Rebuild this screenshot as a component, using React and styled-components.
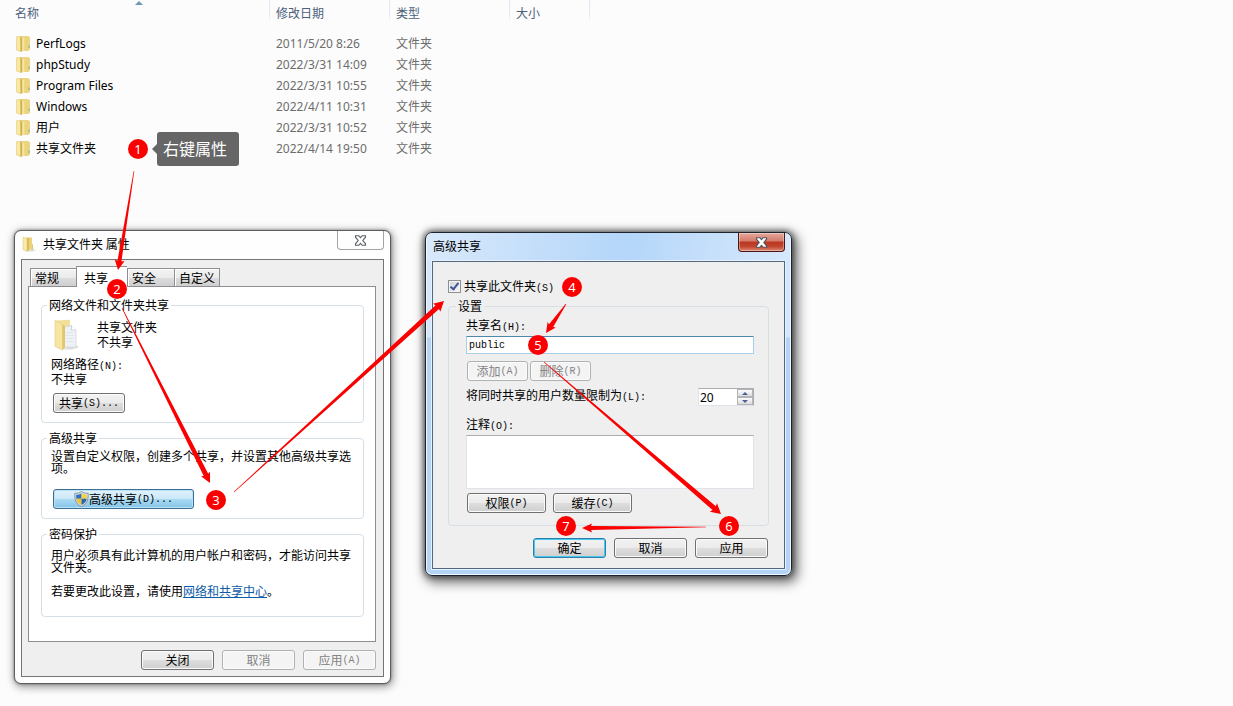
import React from "react";
import styled, { createGlobalStyle, css } from "styled-components";

const GlobalStyle = createGlobalStyle`
  *, *::before, *::after {
    box-sizing: border-box;
  }

  body {
    margin: 0;
    background: #fcfcfc;
  }

  body, button, input, textarea {
    font-family: "Noto Sans", "Noto Sans CJK SC", sans-serif;
    font-size: 12px;
    color: #000;
  }
`;

const Desktop = styled.main`
  position: relative;
  min-height: 100vh;
  overflow: hidden;
`;

/* ---------- file list ---------- */

const FileTable = styled.table`
  border-collapse: collapse;
  table-layout: fixed;
  width: 590px;
`;

const HeadCell = styled.th`
  position: relative;
  width: ${(p) => p.$width}px;
  height: 33px;
  padding: 5px 0 0 ${(p) => (p.$first ? 15 : 6)}px;
  line-height: 18px;
  vertical-align: top;
  text-align: left;
  font-weight: 400;
  color: #4c607a;
  background: linear-gradient(#dbe6f2, #e3ecf5 60%, #fcfcfc) right top / 1px 23px no-repeat;
`;

const SortArrow = styled.svg`
  position: absolute;
  top: 1px;
  left: 135px;
`;

const Cell = styled.td`
  height: 21px;
  padding: 0 0 0 6px;
  line-height: 20px;
  color: #6d6d6d;
`;

const NameCell = styled(Cell)`
  padding-left: 16px;
  color: #000;

  span {
    display: flex;
    align-items: center;
    gap: 6px;
  }
`;

/* ---------- windows ---------- */

const WindowBox = styled.section`
  position: absolute;
  left: ${(p) => p.$left}px;
  top: ${(p) => p.$top}px;
  width: ${(p) => p.$width}px;
  padding: 0 6px 6px;
  border-radius: 7px;
  font-family: "Noto Sans CJK SC", sans-serif;
  line-height: 12px;

  ${(p) =>
    p.$active
      ? css`
          border: 1px solid #1d242c;
          background: linear-gradient(#d3e6fb 0 104px, #b5d3f5 105px);
          box-shadow: inset 0 0 0 1px #eef6ff, 0 0 6px 1px rgba(0, 0, 0, 0.6), 3px 4px 12px 3px rgba(0, 0, 0, 0.5);
        `
      : css`
          border: 1px solid #5c5c5c;
          background: #fefefe;
          box-shadow: 0 0 3px rgba(0, 0, 0, 0.4), 1px 2px 8px 1px rgba(0, 0, 0, 0.4);
        `}
`;

const TitleBar = styled.header`
  display: flex;
  align-items: flex-start;
  height: 28px;
  margin: 0 -5px;
  padding: 0 5px 0 6px;
  border-radius: 6px 6px 0 0;
  background: ${(p) => (p.$active ? "linear-gradient(100deg, #d9e9fb, #c4defa 30%, #b4d6fa 55%, #c4defa 75%, #d6e8fc)" : "transparent")};
`;

const Title = styled.h2`
  display: flex;
  align-items: center;
  gap: 7px;
  flex: 1;
  height: 26px;
  margin: 0;
  font-size: 12px;
  font-weight: 400;
`;

const CloseButton = styled.button`
  display: flex;
  align-items: center;
  justify-content: center;
  width: 47px;
  height: 19px;
  padding: 0;
  border: 1px solid ${(p) => (p.$active ? "#4b1613" : "#a0a4a8")};
  border-top: 0;
  border-radius: 0 0 4px 4px;
  background: ${(p) => (p.$active ? "linear-gradient(#e5a99b, #d3796a 45%, #bb3520 50%, #c2452f 75%, #de8b74)" : "#fefefe")};
  box-shadow: ${(p) => (p.$active ? "inset 0 0 0 1px rgba(255, 255, 255, 0.35)" : "none")};
`;

const Client = styled.div`
  border: 1px solid ${(p) => (p.$active ? "#53677f" : "#757575")};
  background: #efefef;
  padding: ${(p) => (p.$active ? "17px 15px 10px" : "6px 7px 6px 6px")};
  box-shadow: 0 0 0 1px ${(p) => (p.$active ? "#e6f2ff" : "#fff")};
`;

const Tabs = styled.div`
  display: flex;
  align-items: flex-end;
  height: 20px;
  padding-left: 2px;
`;

const Tab = styled.button`
  height: 18px;
  padding: 0 0 0 4px;
  width: ${(p) => p.$width}px;
  text-align: left;
  font-family: inherit;
  line-height: 18px;
  border: 1px solid #8c8e94;
  border-bottom: 0;
  border-right-width: ${(p) => (p.$last ? 1 : 0)}px;
  background: linear-gradient(#f3f3f3, #ebebeb 50%, #dddddd 52%, #cfcfcf);
  box-shadow: inset 1px 1px 0 #fff;

  &[aria-selected="true"] {
    position: relative;
    height: 21px;
    margin-bottom: -1px;
    padding-left: 7px;
    line-height: 17px;
    background: #fff;
  }
`;

const Panel = styled.div`
  display: flex;
  flex-direction: column;
  gap: 9px;
  padding: 12px 11px 24px 12px;
  border: 1px solid #8c8e94;
  background: #fff;
`;

const Group = styled.fieldset`
  min-width: 0;
  margin: ${(p) => (p.$inset ? "7px 0 12px" : "0")};
  padding: 0 ${(p) => (p.$inset ? 7 : 5)}px;
  border: 1px solid #d5dfe5;
  border-radius: 4px;
`;

const Legend = styled.legend`
  padding: 0 2px;
  line-height: 12px;
`;

const GroupBody = styled.div`
  display: flex;
  flex-direction: column;
  align-items: flex-start;
  gap: ${(p) => p.$gap}px;
  padding: ${(p) => p.$pad};
`;

const Lines = styled.p`
  margin: 0;
  line-height: ${(p) => (p.$loose ? 15 : 12)}px;
  white-space: nowrap;
`;

const ShareInfo = styled.div`
  display: flex;
  height: 30px;
  gap: 17px;
  padding-left: 2px;
`;

const ButtonRow = styled.div`
  display: flex;
  gap: ${(p) => p.$gap || 0}px;
  padding-left: ${(p) => p.$indent || 0}px;
`;

const Footer = styled.footer`
  display: flex;
  justify-content: flex-end;
  gap: 8px;
  margin-top: ${(p) => p.$top || 0}px;
  padding-right: ${(p) => p.$right || 0}px;
`;

const Button = styled.button`
  display: flex;
  align-items: center;
  justify-content: center;
  width: ${(p) => p.$width || 73}px;
  height: 20px;
  padding: 0;
  font-family: inherit;
  line-height: 18px;
  white-space: nowrap;
  border: 1px solid #707070;
  border-radius: 3px;
  background: linear-gradient(#f2f2f2, #ebebeb 48%, #dddddd 52%, #cfcfcf);
  box-shadow: inset 0 0 0 1px #fbfbfb;

  &:disabled {
    color: #838383;
    border-color: #adb2b5;
    background: #f4f4f4;
  }

  ${(p) =>
    p.$hot &&
    css`
      border-color: #3c6f94;
      background: linear-gradient(#e0f2fc, #cbe8f8 48%, #a9daf3 52%, #84c4e6);
      box-shadow: inset 0 0 0 1px #b9e2f6;
    `}

  ${(p) =>
    p.$default &&
    css`
      border-color: #2f7ea6;
      box-shadow: inset 0 0 0 1px #46c8f2;
    `}
`;

/* latin parts are half as wide as a chinese character */
const Mono = styled.span`
  font-family: "Liberation Mono", monospace;
  font-size: 10px;
  line-height: 1px;
`;

const Link = styled.a`
  color: #0b5ba8;
  text-decoration: underline;
`;

const CheckRow = styled.div`
  display: flex;
  align-items: center;
  gap: 3px;
  height: 14px;
`;

const CheckBox = styled.input`
  appearance: none;
  display: flex;
  justify-content: center;
  width: 13px;
  height: 13px;
  margin: 0;
  border: 1px solid #8e8f8f;
  background: linear-gradient(135deg, #cdd3da, #f6f6f6);
  box-shadow: inset 0 0 0 1px #f4f4f4;

  &:checked::after {
    content: "";
    width: 5px;
    height: 9px;
    border: solid #3f5595;
    border-width: 0 2px 2px 0;
    transform: rotate(38deg);
  }
`;

const Label = styled.label`
  line-height: 14px;
  white-space: nowrap;
`;

const TextInput = styled.input`
  display: block;
  width: 100%;
  height: 18px;
  padding: 0 2px;
  border: 1px solid #a9cfe6;
  border-top-color: #4f87ad;
  border-radius: 1px;
  font-family: "Liberation Mono", monospace;
  font-size: 10px;
  background: #fff;
`;

const Field = styled.div`
  display: flex;
  flex-direction: column;
  gap: 4px;
  width: 100%;
  margin-top: ${(p) => p.$top || 0}px;
`;

const Comment = styled.textarea`
  display: block;
  width: 100%;
  height: 54px;
  resize: none;
  border: 1px solid #e2e3ea;
  border-top-color: #abadb3;
  background: #fff;
`;

const LimitRow = styled.div`
  display: flex;
  align-items: flex-start;
  justify-content: space-between;
  width: 100%;
`;

const Spinner = styled.div`
  display: flex;
  width: 56px;
  height: 18px;
  border: 1px solid #e2e3ea;
  border-color: #abadb3 #abadb3 #e2e3ea #e2e3ea;
  background: #fff;

  input {
    flex: 1;
    min-width: 0;
    padding: 0 1px;
    border: 0;
    background: transparent;
  }
`;

const SpinButtons = styled.div`
  display: flex;
  flex-direction: column;
  width: 16px;

  button {
    display: flex;
    flex: 1;
    align-items: center;
    justify-content: center;
    padding: 0;
    border: 1px solid #b0b3b8;
    background: linear-gradient(#fbfbfb, #dcdcdc);
  }
`;

/* ---------- annotations ---------- */

const Badge = styled.div`
  position: absolute;
  left: ${(p) => p.$x - 10}px;
  top: ${(p) => p.$y - 10}px;
  width: 20px;
  height: 20px;
  border-radius: 50%;
  background: #fb0000;
  color: #fff;
  font-size: 13px;
  line-height: 20px;
  text-align: center;
`;

const Tip = styled.div`
  position: absolute;
  left: 157px;
  top: 132px;
  height: 34px;
  padding: 0 12px 0 6px;
  border-radius: 3px;
  background: #666;
  color: #fff;
  font-size: 16px;
  line-height: 34px;

  &::before {
    content: "";
    position: absolute;
    left: -5px;
    top: 12px;
    border: solid transparent;
    border-width: 5px 5px 5px 0;
    border-right-color: #666;
  }
`;

const ArrowLayer = styled.svg`
  position: absolute;
  left: 0;
  top: 0;
  pointer-events: none;
`;

const files = [
  { name: "PerfLogs", date: "2011/5/20 8:26" },
  { name: "phpStudy", date: "2022/3/31 14:09" },
  { name: "Program Files", date: "2022/3/31 10:55" },
  { name: "Windows", date: "2022/4/11 10:31" },
  { name: "用户", date: "2022/3/31 10:52" },
  { name: "共享文件夹", date: "2022/4/14 19:50" },
];

const steps = [
  [138, 149],
  [117, 289],
  [216, 500],
  [572, 287],
  [538, 345],
  [729, 526],
  [566, 526],
];

const arrows = [
  { from: [134, 171], to: [118, 270], shaft: 4, head: 10 },
  { from: [122, 308], to: [210, 483], shaft: 5, head: 10 },
  { from: [234, 492], to: [444, 301], shaft: 5, head: 11 },
  { from: [566, 304], to: [546, 333], shaft: 5, head: 10 },
  { from: [544, 362], to: [721, 514], shaft: 5, head: 11 },
  { from: [706, 527], to: [582, 528], shaft: 4, head: 9 },
];

const Arrow = ({ from, to, shaft, head }) => {
  const dx = to[0] - from[0];
  const dy = to[1] - from[1];
  const len = Math.hypot(dx, dy);
  const angle = (Math.atan2(dy, dx) * 180) / Math.PI;
  const neck = len - 9;
  return (
    <path
      transform={`translate(${from[0]} ${from[1]}) rotate(${angle})`}
      d={`M0 -.3 L${neck} ${-shaft / 2} L${neck - 1} ${-head / 2} L${len} 0 L${neck - 1} ${head / 2} L${neck} ${shaft / 2} L0 .3 Z`}
      fill="#fb0000"
    />
  );
};

const FolderIcon = () => (
  <svg width="14" height="16" viewBox="0 0 14 16" aria-hidden="true">
    <path d="M4 .5h8.500l1 1v12l-1 1H5z" fill="#ecd680" stroke="#e2c871" strokeWidth=".6" />
    <path d="M8 1.500h4.500v12.500H8z" fill="#ecd47a" />
    <path d="M.6.8L4.500.5 5 15.500.6 14z" fill="#f8e9a7" stroke="#e0c468" strokeWidth=".6" />
    <path d="M4.400.6L6.300 2.200v13.200H4.600z" fill="#cfb04a" />
    <path d="M6.300 2.200L8.300 1.500v13l-2 .9z" fill="#f5e6a6" />
    <path d="M12.600 9.500h.9v2.500h-.9z" fill="#6aa7a0" />
  </svg>
);

const TitleFolderIcon = () => (
  <svg width="14" height="16" viewBox="0 0 14 16" aria-hidden="true">
    <path d="M10 12l3.500 2-3 1.500H5z" fill="#ddd" />
    <path d="M4 1.500h6v12L5 14z" fill="#ecd27b" />
    <path d="M1 1l4 1.600V15.500L1 13.600z" fill="#f9e9ab" stroke="#dfc46c" strokeWidth=".5" />
    <path d="M5 2.600l2-1v12.600l-2 1.300z" fill="#d9bd5c" />
    <path d="M10 8l1 .5v4.700l-1 .4z" fill="#dfc770" />
  </svg>
);

const BigFolderIcon = () => (
  <svg width="27" height="32" viewBox="0 0 27 32" aria-hidden="true">
    <path d="M21 25l5 3-7 2.500H9z" fill="#ddd" />
    <path d="M2 1.500L17 .8v25L9 29z" fill="#f1e09b" />
    <path d="M11 8l7.500-1.500 4.500 4.500v17.500L11 28z" fill="#eef1f6" stroke="#c8ced4" strokeWidth=".6" />
    <path d="M18.500 6.500v4.500H23" fill="#fff" stroke="#b9c0c7" strokeWidth=".6" />
    <path d="M12.500 13.500h8M12.500 16.500h8M12.500 19.500h8M12.500 22.500h8" fill="none" stroke="#e0e5ec" />
    <path d="M2 1.500l7.500 4V31L2 27.500z" fill="#f7e6a3" stroke="#e2ca79" strokeWidth=".6" />
    <path d="M9.500 5.500L12 7v21.500L9.500 31z" fill="#e0c76c" />
  </svg>
);

const ShieldIcon = () => (
  <svg width="15" height="16" viewBox="0 0 15 16" aria-hidden="true">
    <path d="M7.500.5C9.500 2 11.500 2.300 14.200 2.300 14.400 8 13.500 13 7.500 15.600 1.500 13 .6 8 .8 2.300 3.500 2.300 5.500 2 7.500.5z" fill="#d6dde3" stroke="#77858f" strokeWidth=".8" />
    <path d="M7.500 2.300v5.500H2.300c-.1-1.300-.1-2.700-.1-4 2 0 3.800-.5 5.300-1.500z" fill="#2f70c0" />
    <path d="M7.500 2.300v5.500h5.200c.1-1.300.1-2.700.1-4-2 0-3.800-.5-5.300-1.500z" fill="#f6d23e" />
    <path d="M7.500 7.800v6.100C4 12.400 2.700 10.300 2.300 7.800z" fill="#f1c22c" />
    <path d="M7.500 7.800v6.100c3.500-1.500 4.800-3.600 5.200-6.100z" fill="#2a66b5" />
  </svg>
);

const CloseIcon = ({ active }) => (
  <svg width="13" height="11" viewBox="0 0 13 11" aria-hidden="true">
    <path
      d="M1.500.7h3.300l1.700 2L8.200.7h3.300v1.500L8.800 5.500l2.700 3.300v1.500H8.200l-1.700-2-1.700 2H1.500V8.800L4.200 5.500 1.500 2.200z"
      fill={active ? "#fff" : "#fdfdfd"}
      stroke={active ? "#51555f" : "#5a5e66"}
      strokeWidth="1.100"
    />
  </svg>
);

const FileList = () => (
  <FileTable>
    <thead>
      <tr>
        <HeadCell $width={270} $first>
          名称
          <SortArrow width="8" height="4" viewBox="0 0 8 4" aria-hidden="true">
            <path d="M4 0l4 4H0z" fill="#6d98b5" />
          </SortArrow>
        </HeadCell>
        <HeadCell $width={120}>修改日期</HeadCell>
        <HeadCell $width={120}>类型</HeadCell>
        <HeadCell $width={80}>大小</HeadCell>
      </tr>
    </thead>
    <tbody>
      {files.map((file) => (
        <tr key={file.name}>
          <NameCell>
            <span>
              <FolderIcon />
              {file.name}
            </span>
          </NameCell>
          <Cell>{file.date}</Cell>
          <Cell>文件夹</Cell>
          <Cell />
        </tr>
      ))}
    </tbody>
  </FileTable>
);

const Window = ({ title, icon, active, left, top, width, children }) => (
  <WindowBox $active={active} $left={left} $top={top} $width={width}>
    <TitleBar $active={active}>
      <Title>
        {icon}
        {title}
      </Title>
      <CloseButton type="button" $active={active} aria-label="关闭">
        <CloseIcon active={active} />
      </CloseButton>
    </TitleBar>
    <Client $active={active}>{children}</Client>
  </WindowBox>
);

const PropertiesWindow = () => (
  <Window title="共享文件夹 属性" icon={<TitleFolderIcon />} left={14} top={230} width={377}>
    <Tabs role="tablist">
      <Tab type="button" role="tab" $width={46}>常规</Tab>
      <Tab type="button" role="tab" aria-selected="true" $width={51}>共享</Tab>
      <Tab type="button" role="tab" $width={47}>安全</Tab>
      <Tab type="button" role="tab" $width={46} $last>自定义</Tab>
    </Tabs>
    <Panel>
      <Group>
        <Legend>网络文件和文件夹共享</Legend>
        <GroupBody $gap={7} $pad="8px 4px 9px">
          <ShareInfo>
            <BigFolderIcon />
            <Lines $loose>
              共享文件夹
              <br />
              不共享
            </Lines>
          </ShareInfo>
          <Lines $loose>
            网络路径<Mono>(N):</Mono>
            <br />
            不共享
          </Lines>
          <ButtonRow $indent={2}>
            <Button type="button" $width={72}>
              共享<Mono>(S)...</Mono>
            </Button>
          </ButtonRow>
        </GroupBody>
      </Group>
      <Group>
        <Legend>高级共享</Legend>
        <GroupBody $gap={15} $pad="6px 4px 9px">
          <Lines>
            设置自定义权限，创建多个共享，并设置其他高级共享选
            <br />
            项。
          </Lines>
          <ButtonRow $indent={2}>
            <Button type="button" $width={141} $hot>
              <ShieldIcon />
              高级共享<Mono>(D)...</Mono>
            </Button>
          </ButtonRow>
        </GroupBody>
      </Group>
      <Group>
        <Legend>密码保护</Legend>
        <GroupBody $gap={12} $pad="9px 4px 19px">
          <Lines>
            用户必须具有此计算机的用户帐户和密码，才能访问共享
            <br />
            文件夹。
          </Lines>
          <Lines>
            若要更改此设置，请使用<Link href="#">网络和共享中心</Link>。
          </Lines>
        </GroupBody>
      </Group>
    </Panel>
    <Footer $top={8}>
      <Button type="button">关闭</Button>
      <Button type="button" disabled>取消</Button>
      <Button type="button" disabled>
        应用<Mono>(A)</Mono>
      </Button>
    </Footer>
  </Window>
);

const AdvancedWindow = () => (
  <Window title="高级共享" active left={425} top={232} width={367}>
    <CheckRow>
      <CheckBox type="checkbox" id="share" defaultChecked />
      <Label htmlFor="share">
        共享此文件夹<Mono>(S)</Mono>
      </Label>
    </CheckRow>
    <Group $inset>
      <Legend>设置</Legend>
      <GroupBody $gap={7} $pad="6px 7px 12px 10px">
        <Field>
          <Label htmlFor="share-name">
            共享名<Mono>(H):</Mono>
          </Label>
          <TextInput id="share-name" type="text" defaultValue="public" />
        </Field>
        <ButtonRow $gap={2} $indent={1}>
          <Button type="button" $width={61} disabled>
            添加<Mono>(A)</Mono>
          </Button>
          <Button type="button" $width={61} disabled>
            删除<Mono>(R)</Mono>
          </Button>
        </ButtonRow>
        <LimitRow>
          <Label htmlFor="limit">
            将同时共享的用户数量限制为<Mono>(L):</Mono>
          </Label>
          <Spinner>
            <input id="limit" type="text" defaultValue="20" />
            <SpinButtons>
              <button type="button" aria-label="增加">
                <svg width="6" height="3" viewBox="0 0 6 3"><path d="M3 0l3 3H0z" fill="#4a5f97" /></svg>
              </button>
              <button type="button" aria-label="减少">
                <svg width="6" height="3" viewBox="0 0 6 3"><path d="M3 3l3-3H0z" fill="#4a5f97" /></svg>
              </button>
            </SpinButtons>
          </Spinner>
        </LimitRow>
        <Field $top={4}>
          <Label htmlFor="comment">
            注释<Mono>(O):</Mono>
          </Label>
          <Comment id="comment" />
          <ButtonRow $gap={7} $indent={1}>
            <Button type="button" $width={79}>
              权限<Mono>(P)</Mono>
            </Button>
            <Button type="button" $width={79}>
              缓存<Mono>(C)</Mono>
            </Button>
          </ButtonRow>
        </Field>
      </GroupBody>
    </Group>
    <Footer $right={1}>
      <Button type="button" $default>确定</Button>
      <Button type="button">取消</Button>
      <Button type="button">应用</Button>
    </Footer>
  </Window>
);

const App = () => {
  return (
    <Desktop>
      <GlobalStyle />
      <FileList />
      <PropertiesWindow />
      <AdvancedWindow />
      <ArrowLayer width="800" height="600" viewBox="0 0 800 600" aria-hidden="true">
        {arrows.map((arrow) => (
          <Arrow key={arrow.from.join()} {...arrow} />
        ))}
      </ArrowLayer>
      {steps.map(([x, y], i) => (
        <Badge key={i} $x={x} $y={y}>
          {i + 1}
        </Badge>
      ))}
      <Tip>右键属性</Tip>
    </Desktop>
  );
};

export default App;
